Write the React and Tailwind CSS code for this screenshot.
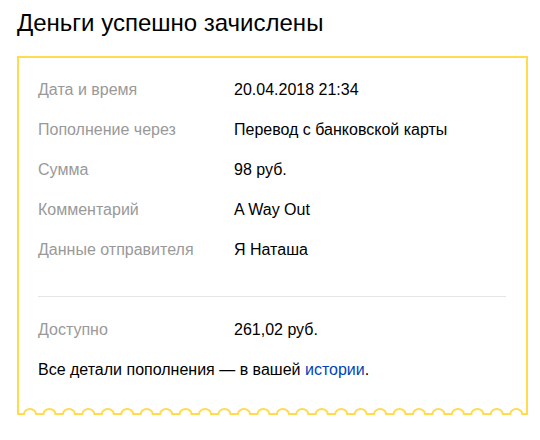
import React from "react";

const rows = [
  ["Дата и время", "20.04.2018 21:34"],
  ["Пополнение через", "Перевод с банковской карты"],
  ["Сумма", "98 руб."],
  ["Комментарий", "A Way Out"],
  ["Данные отправителя", "Я Наташа"],
];

// scalloped bottom edge of the receipt
const buildEdge = () => {
  let d = "M0 6 H7";
  const n = 26;
  const period = 19.45;
  for (let i = 0; i < n; i++) {
    const x = 7 + i * period;
    d += ` H${x.toFixed(2)} A6 5 0 0 1 ${(x + 12).toFixed(2)} 6`;
  }
  d += " H511";
  return d;
};

const Row = ({ label, value }) => (
  <div className="flex items-center h-10">
    <div className="w-[196px] shrink-0 text-[#999]">{label}</div>
    <div className="text-black">{value}</div>
  </div>
);

const App = () => {
  return (
    <div className="min-h-screen bg-white font-['Liberation_Sans',Arial,sans-serif] text-[16px]">
      <div className="pl-[17px] pt-[9px]">
        <h1 className="text-[24px] leading-[28px] text-black font-normal">
          Деньги успешно зачислены
        </h1>

        <div className="mt-[19px] w-[511px]">
          <div className="border-2 border-b-0 border-[#ffdb4d] pl-[19px] pr-[20px] pt-[12px] pb-[18px]">
            {rows.map(([l, v]) => (
              <Row key={l} label={l} value={v} />
            ))}

            <div className="mt-[26px] h-px bg-[#e5e5e5]"></div>

            <div className="mt-[13px]">
              <Row label="Доступно" value="261,02 руб." />
              <div className="flex items-center h-10 text-black">
                <span>
                  Все детали пополнения — в вашей{" "}
                  <a href="#" className="text-[#04b]">
                    истории
                  </a>
                  .
                </span>
              </div>
            </div>
          </div>
          <svg width="511" height="8" viewBox="0 0 511 8" className="block">
            <path d={buildEdge()} fill="none" stroke="#ffdb4d" strokeWidth="2" />
            <path d="M1 0 V7 M510 0 V7" fill="none" stroke="#ffdb4d" strokeWidth="2" />
          </svg>
        </div>
      </div>
    </div>
  );
};

export default App;
